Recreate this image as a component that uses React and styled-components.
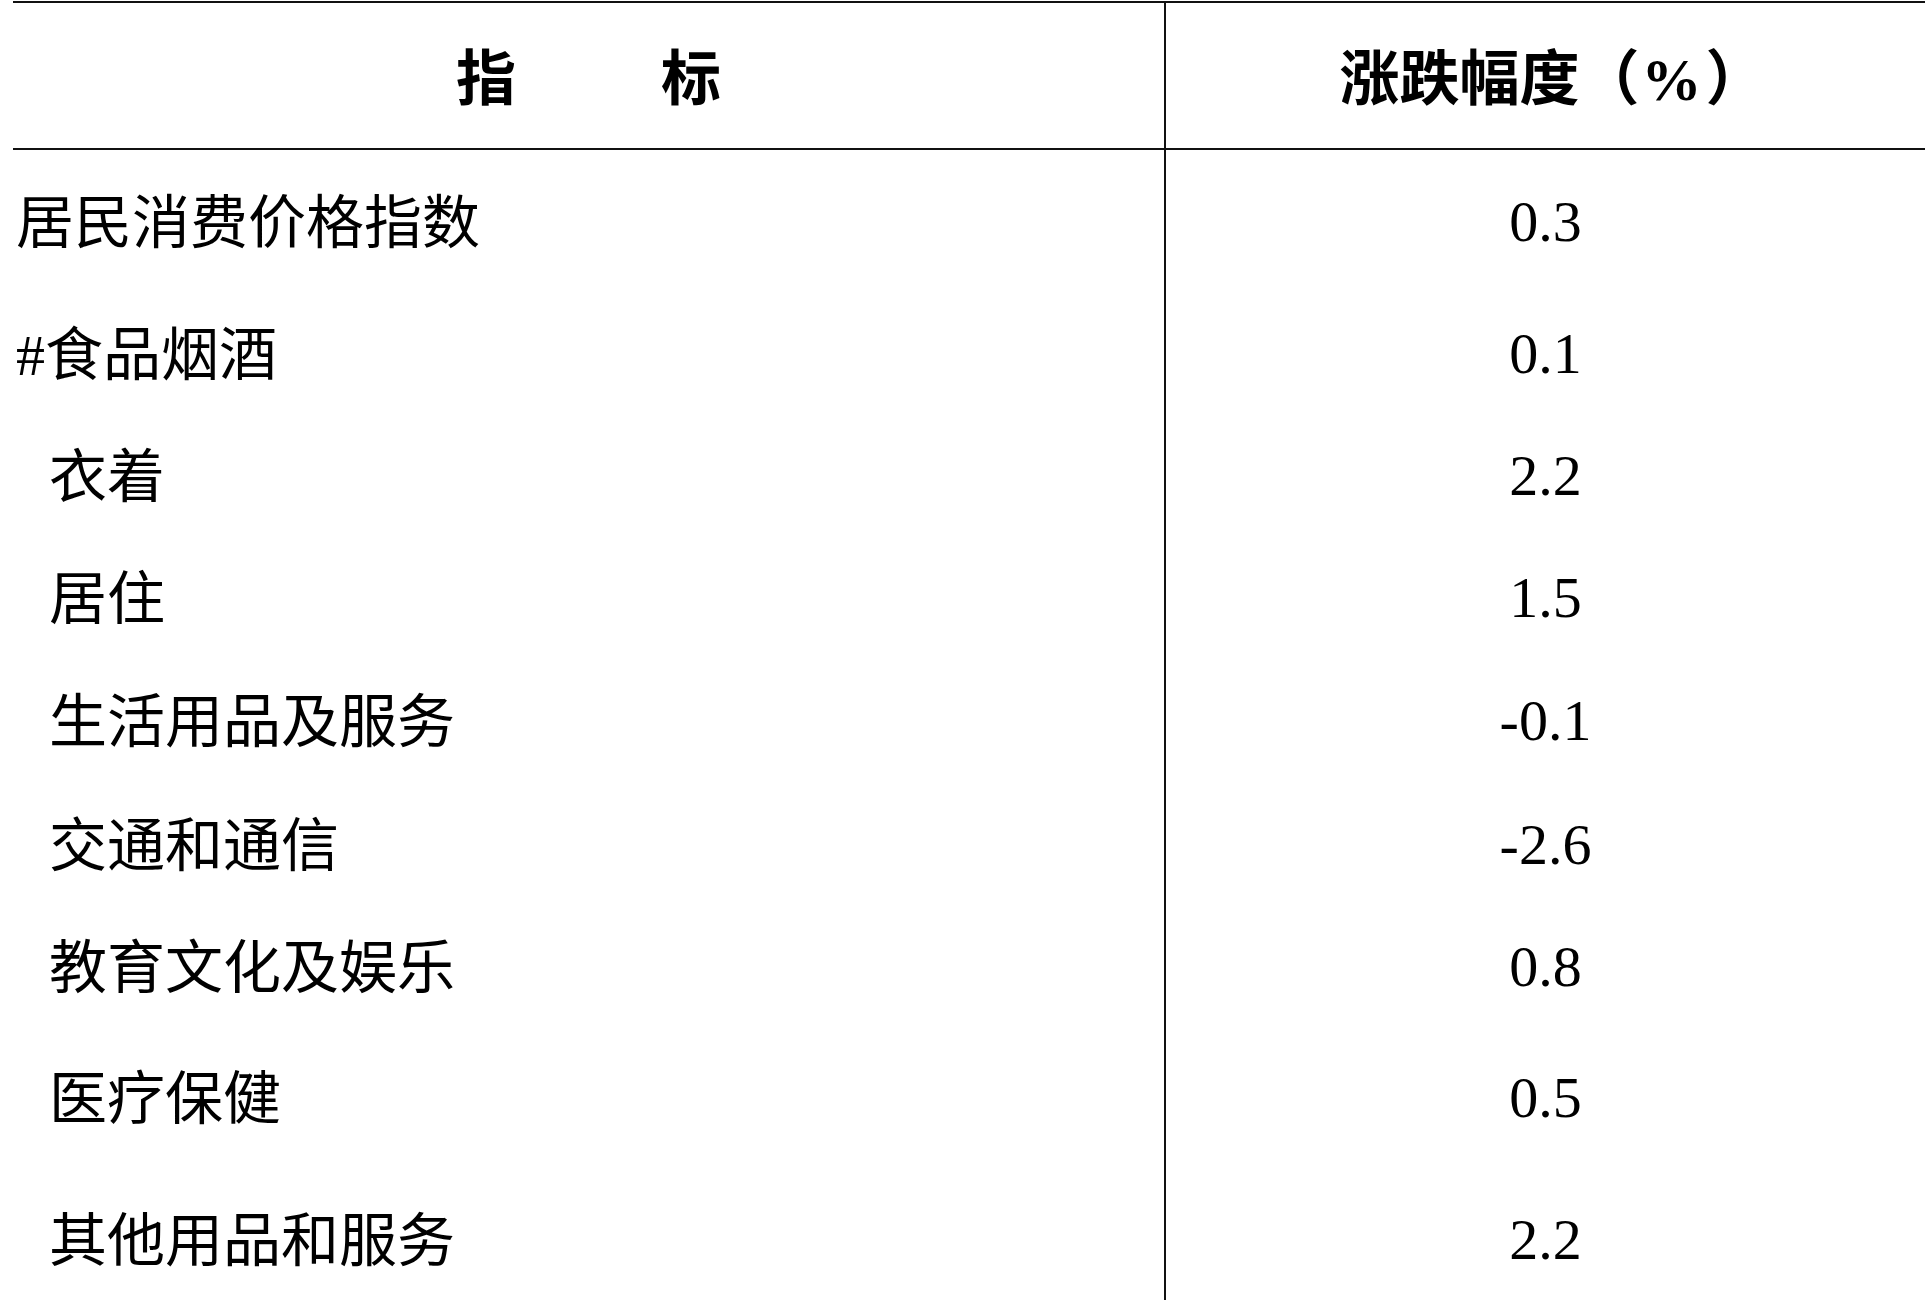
import React from 'react';
import styled, { createGlobalStyle } from 'styled-components';

const GlobalStyle = createGlobalStyle`
  html, body {
    margin: 0;
    padding: 0;
    background: #ffffff;
    overflow: hidden;
  }
  body {
    font-family: "Liberation Serif", "Noto Sans CJK SC", serif;
    color: #000;
  }
`;

const Page = styled.div`
  width: 1925px;
  height: 1300px;
  padding: 1px 0 0 13px;
  box-sizing: border-box;
  overflow: hidden;
`;

const Table = styled.div`
  display: flex;
  flex-direction: column;
  border-top: 2px solid #111;
`;

const Row = styled.div`
  display: grid;
  grid-template-columns: 1151px 1fr;
  height: ${props => props.h}px;
  border-bottom: ${props => (props.head ? '2px solid #111' : 'none')};
`;

const LabelCell = styled.div`
  display: flex;
  align-items: center;
  justify-content: ${props => (props.head ? 'center' : 'flex-start')};
  padding-left: ${props => (props.head ? 0 : props.indent ? 36 : 3)}px;
  padding-top: ${props => (props.head ? 8 : 0)}px;
  font-size: ${props => (props.head ? 60 : 58)}px;
  font-weight: ${props => (props.head ? 700 : 400)};
  line-height: 1;
  white-space: pre;
`;

const ValueCell = styled.div`
  display: flex;
  align-items: center;
  justify-content: center;
  border-left: 2px solid #111;
  font-size: ${props => (props.head ? 60 : 58)}px;
  font-weight: ${props => (props.head ? 700 : 400)};
  line-height: 1;
  padding: ${props => (props.head ? '8px 0 0 14px' : '0 0 5px 0')};
`;

const HeadGap = styled.span`
  display: inline-block;
  width: 145px;
`;

const Percent = styled.span`
  margin: 0 4px 0 2px;
`;

const rows = [
  { label: '居民消费价格指数', value: '0.3', h: 148 },
  { label: '#食品烟酒', value: '0.1', h: 116 },
  { label: '衣着', value: '2.2', h: 128, indent: true },
  { label: '居住', value: '1.5', h: 116, indent: true },
  { label: '生活用品及服务', value: '-0.1', h: 130, indent: true },
  { label: '交通和通信', value: '-2.6', h: 118, indent: true },
  { label: '教育文化及娱乐', value: '0.8', h: 126, indent: true },
  { label: '医疗保健', value: '0.5', h: 136, indent: true },
  { label: '其他用品和服务', value: '2.2', h: 148, indent: true },
];

export default function App() {
  return (
    <>
      <GlobalStyle />
      <Page>
        <Table>
          <Row head h={145}>
            <LabelCell head>
              指<HeadGap />标
            </LabelCell>
            <ValueCell head>
              涨跌幅度（<Percent>%</Percent>）
            </ValueCell>
          </Row>
          {rows.map(r => (
            <Row key={r.label} h={r.h}>
              <LabelCell indent={r.indent}>{r.label}</LabelCell>
              <ValueCell>{r.value}</ValueCell>
            </Row>
          ))}
        </Table>
      </Page>
    </>
  );
}
